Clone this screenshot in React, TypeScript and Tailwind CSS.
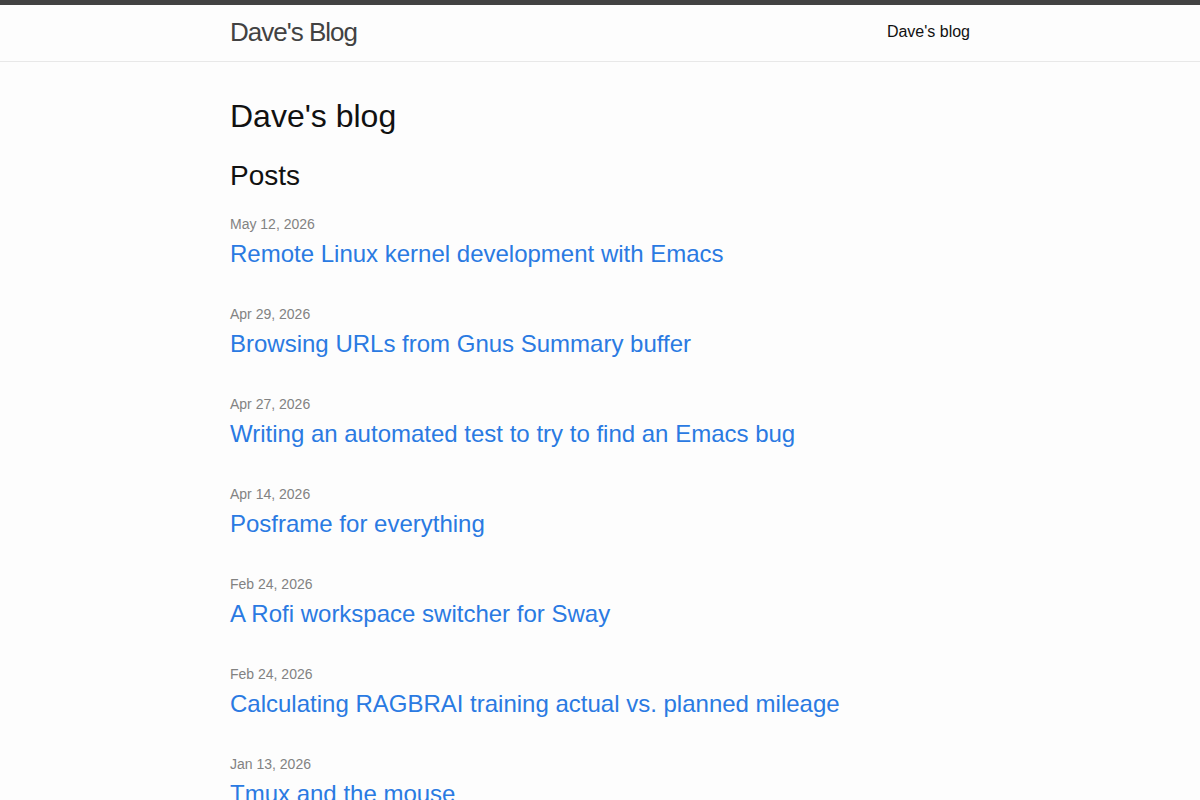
const posts = [
  { date: 'May 12, 2026', title: 'Remote Linux kernel development with Emacs' },
  { date: 'Apr 29, 2026', title: 'Browsing URLs from Gnus Summary buffer' },
  { date: 'Apr 27, 2026', title: 'Writing an automated test to try to find an Emacs bug' },
  { date: 'Apr 14, 2026', title: 'Posframe for everything' },
  { date: 'Feb 24, 2026', title: 'A Rofi workspace switcher for Sway' },
  { date: 'Feb 24, 2026', title: 'Calculating RAGBRAI training actual vs. planned mileage' },
  { date: 'Jan 13, 2026', title: 'Tmux and the mouse' }
];

const SiteHeader = () => {
  return (
    <header className="min-h-[62px] border-t-[5px] border-b border-t-[#424242] border-b-[#e8e8e8]">
      <div className="mx-auto flex max-w-[740px] items-center justify-between">
        <a href="#" className="text-[26px] font-light leading-[54px] tracking-[-1px] text-[#424242]">
          Dave's Blog
        </a>
        <nav className="leading-[54px]">
          <a href="#" className="text-[16px] text-[#111]">
            Dave's blog
          </a>
        </nav>
      </div>
    </header>
  );
};

export default function App() {
  return (
    <div className="min-h-[800px] bg-[#fdfdfd] font-['Liberation_Sans',Arial,sans-serif] text-[16px] leading-[1.5] text-[#111]">
      <SiteHeader />
      <main className="mx-auto max-w-[740px] py-[30px]">
        <h1 className="mb-[15px] text-[32px] leading-[1.5]">Dave's blog</h1>
        <h2 className="mb-[15px] text-[28px] leading-[1.5]">Posts</h2>
        <ul>
          {posts.map((post, key) => {
            return (
              <li key={key} className="mb-[30px]">
                <span className="text-[14px] text-[#828282]">{post.date}</span>
                <h3>
                  <a href="#" className="block text-[24px] leading-[1.5] text-[#2a7ae2]">
                    {post.title}
                  </a>
                </h3>
              </li>
            );
          })}
        </ul>
      </main>
    </div>
  );
}
